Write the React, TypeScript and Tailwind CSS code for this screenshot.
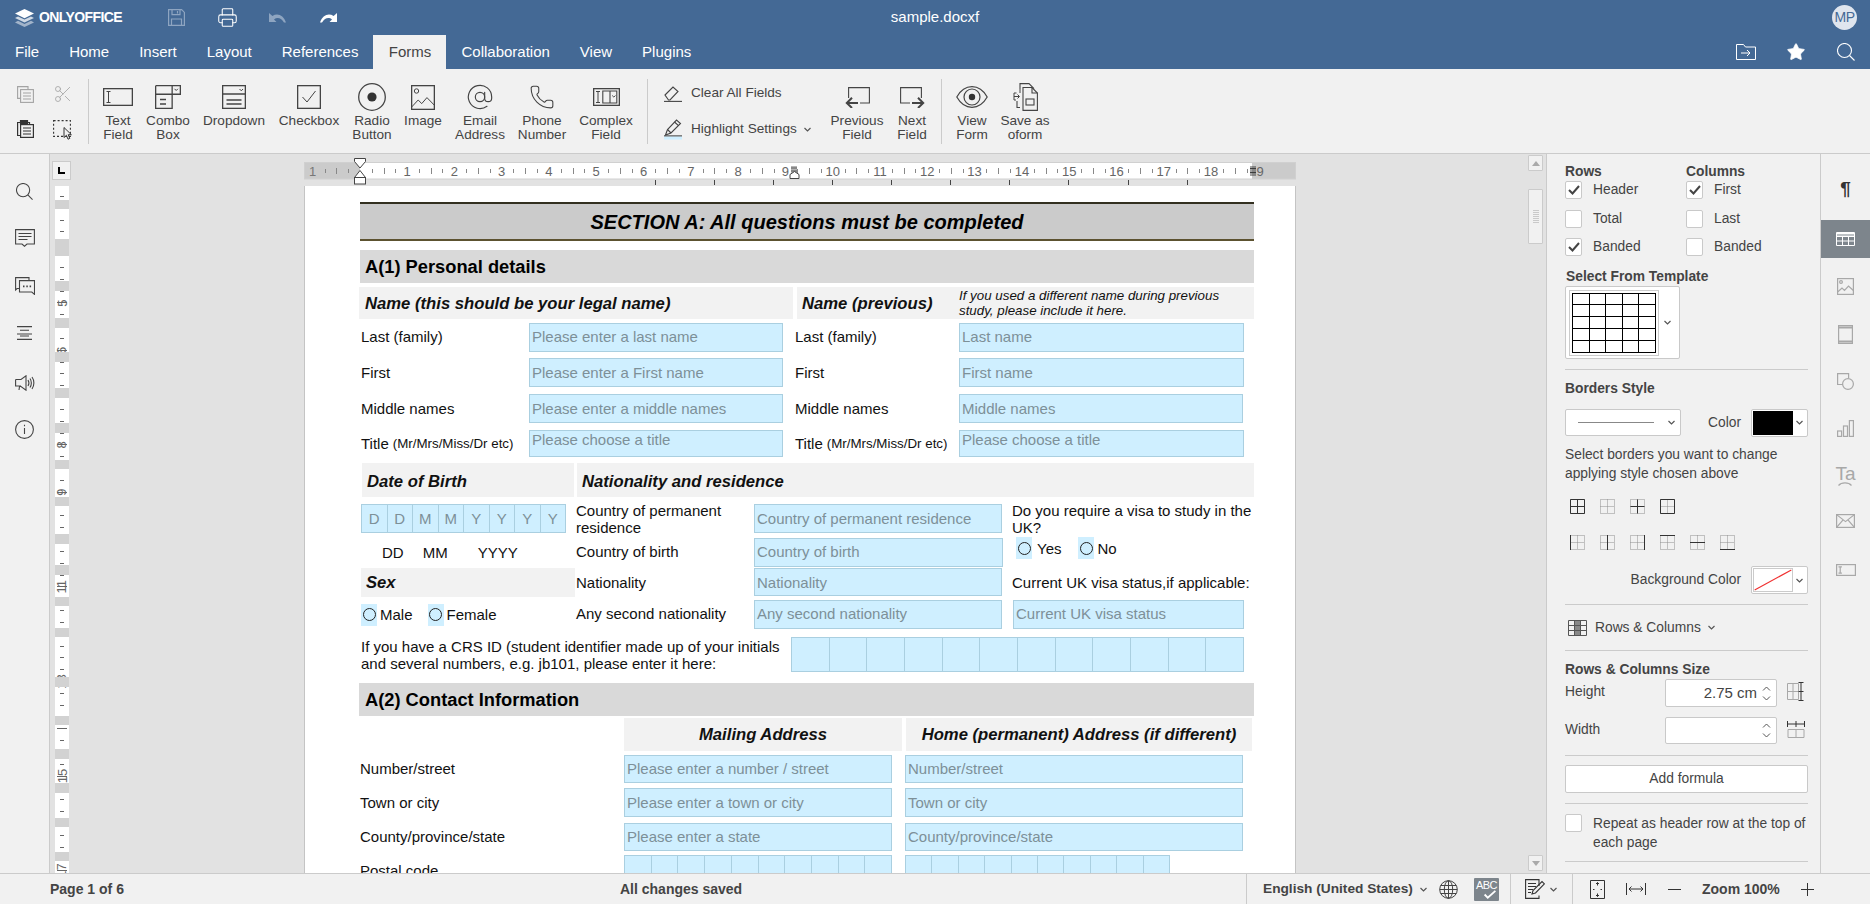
import type { ReactNode } from "react";
import { Scissors, Printer, Star, AtSign, Phone } from "lucide-react";

const DARK = "#444444";

function Chevron({ color = "#555555", size = 9 }: { color?: string; size?: number }) {
  return (
    <svg width={size} height={size} viewBox="0 0 9 9" fill="none" className="shrink-0">
      <path d="M1.5 3l3 3 3-3" stroke={color} strokeWidth="1.2" />
    </svg>
  );
}

/* ---------- header icons ---------- */
function Logo() {
  return (
    <svg width="19" height="18" viewBox="0 0 19 18">
      <path d="M9.5 0L19 4.6 9.5 9.2 0 4.6z" fill="#ffffff" />
      <path d="M3 7.4L9.5 10.6 16 7.4l3 1.6-9.5 4.6L0 9z" fill="#ffffff" opacity="0.75" />
      <path d="M3 11.8L9.5 15 16 11.8l3 1.6L9.5 18 0 13.4z" fill="#ffffff" opacity="0.5" />
    </svg>
  );
}

function SaveIcon() {
  return (
    <svg width="17" height="17" viewBox="0 0 17 17" fill="none" stroke="#8ea5c1" strokeWidth="1.2">
      <path d="M.6.6h13l2.8 2.8v13H.6z" />
      <path d="M4 .6v5h8v-5M9.5 2v2.4M3.5 16.4V10h10v6.4" />
    </svg>
  );
}

function UndoIcon({ flip = false }: { flip?: boolean }) {
  return (
    <svg width="17" height="10" viewBox="0 0 17 10" className={flip ? "-scale-x-100" : ""}>
      <path d="M0 0v9h7.5L5 6.4C8 4 12 4.4 15 9.5h2C14.5 2 8.5-.5 3.4 2.9z" fill="currentColor" />
    </svg>
  );
}

function FolderArrow() {
  return (
    <svg width="20" height="16" viewBox="0 0 20 16" fill="none" stroke="#ffffff" strokeWidth="1">
      <path d="M.5 15.5V.5h7l2 2.5h10v12.5z" />
      <path d="M5 9h9M11 6l3 3-3 3" />
    </svg>
  );
}

function SearchIcon({ color = "#ffffff", size = 18 }: { color?: string; size?: number }) {
  return (
    <svg width={size} height={size} viewBox="0 0 18 18" fill="none" stroke={color} strokeWidth="1.1">
      <circle cx="7.5" cy="7.5" r="7" />
      <path d="M12.5 12.5L17.5 17.5" />
    </svg>
  );
}

/* ---------- ribbon icons ---------- */
const strokeProps = { fill: "none", stroke: DARK, strokeWidth: 1.3 };

function TextFieldIcon() {
  return (
    <svg width="30" height="18" viewBox="0 0 30 18" {...strokeProps}>
      <rect x=".65" y=".65" width="28.7" height="16.7" />
      <path d="M3.5 3.5h4M5.5 3.5v11M3.5 14.5h4" strokeWidth="1" />
    </svg>
  );
}
function ComboIcon() {
  return (
    <svg width="26" height="24" viewBox="0 0 26 24" {...strokeProps}>
      <path d="M.65.65h16.5v8.6h8.2V.65h-8.2M17.15 9.25v14.1H.65V.65M.65 9.25h16.5" />
      <path d="M5 14.5h6M5 19h6" />
      <path d="M19.5 3.8l1.7 1.7 1.7-1.7" strokeWidth="1" />
    </svg>
  );
}
function DropdownIcon() {
  return (
    <svg width="24" height="24" viewBox="0 0 24 24" {...strokeProps}>
      <rect x=".65" y=".65" width="22.7" height="22.7" />
      <path d="M.65 9h22.7M4.5 15h15M4.5 19h15" />
      <path d="M17.5 4l1.8 1.8L21 4" strokeWidth="1" />
    </svg>
  );
}
function CheckboxIcon() {
  return (
    <svg width="24" height="24" viewBox="0 0 24 24" {...strokeProps}>
      <rect x=".65" y=".65" width="22.7" height="22.7" />
      <path d="M5.5 12l4.5 5L18.5 6" strokeWidth="1" />
    </svg>
  );
}
function RadioIcon() {
  return (
    <svg width="28" height="28" viewBox="0 0 28 28" {...strokeProps}>
      <circle cx="14" cy="14" r="13.3" />
      <circle cx="14" cy="14" r="4.6" fill="#333333" stroke="none" />
    </svg>
  );
}
function ImageIcon() {
  return (
    <svg width="24" height="25" viewBox="0 0 24 25" {...strokeProps}>
      <rect x=".65" y=".65" width="22.7" height="23.7" />
      <circle cx="5.5" cy="6" r="2.2" strokeWidth="1" />
      <path d="M.65 22l6.5-7 3.6 3.6 5.2-6 7.3 7.5" strokeWidth="1" />
    </svg>
  );
}
function ComplexIcon() {
  return (
    <svg width="27" height="18" viewBox="0 0 27 18" {...strokeProps}>
      <rect x=".65" y=".65" width="25.7" height="16.7" />
      <path d="M3 3.5h4M5 3.5v11M3 14.5h4" strokeWidth="1" />
      <path d="M9.8 3h14v12h-14zM17 3v12" strokeWidth="1.1" />
      <path d="M19.2 7.5l1.6 1.6 1.6-1.6" strokeWidth="1" />
    </svg>
  );
}
function EraserIcon() {
  return (
    <svg width="19" height="16" viewBox="0 0 19 16" fill="none" stroke={DARK} strokeWidth="1.1">
      <path d="M1 9l8-8 5 4.5-8 8.5H4.5z" />
      <path d="M0 15.4h18" />
    </svg>
  );
}
function HighlightIcon() {
  return (
    <svg width="19" height="21" viewBox="0 0 19 21" fill="none" stroke={DARK} strokeWidth="1.1">
      <path d="M1.5 16l2-5.5L12.5 1l4 3.5-9.5 9.5z" />
      <path d="M10.5 3l4 3.7M3.5 10.5l3.5 3.5" />
      <path d="M0 17h18" strokeWidth="1.3" />
      <rect x="0" y="17.6" width="18" height="3" fill="#cfefff" stroke="none" />
    </svg>
  );
}
function PrevIcon({ flip = false }: { flip?: boolean }) {
  return (
    <svg width="25" height="21" viewBox="0 0 25 21" fill="none" stroke={DARK} className={flip ? "-scale-x-100" : ""}>
      <path d="M3.6 11V.6h20.8V16H15" strokeWidth="1.1" />
      <path d="M13 16H1.8M7 10.8L1.8 16 7 21" strokeWidth="2" />
    </svg>
  );
}
function EyeIcon() {
  return (
    <svg width="32" height="22" viewBox="0 0 32 22" fill="none" stroke={DARK} strokeWidth="1.2">
      <path d="M.8 11C4.5 4.5 10 .7 16 .7S27.5 4.5 31.2 11C27.5 17.5 22 21.3 16 21.3S4.5 17.5.8 11z" />
      <circle cx="16" cy="11" r="8" />
      <circle cx="16" cy="11" r="3.2" fill="#333333" stroke="none" />
    </svg>
  );
}
function OformIcon() {
  return (
    <svg width="25" height="28" viewBox="0 0 25 28" fill="none" stroke={DARK} strokeWidth="1.1">
      <path d="M7 6V.6h9l5 5" />
      <path d="M10 4.5h9l5.4 5.5v17.4H10z" />
      <path d="M19 4.5V10h5.4" />
      <path d="M7 6v4M3.5 10H1v7h2M1 13.5h5M4.5 11.5l2 2-2 2" strokeWidth="1" />
      <path d="M4 18v6.5h3" />
      <rect x="13" y="16" width="8" height="6" />
    </svg>
  );
}
function CopyIcon() {
  return (
    <svg width="17" height="17" viewBox="0 0 17 17" fill="none" stroke="#a3a3a3" strokeWidth="1.1">
      <path d="M11 3.5V.6H.6v11.8h3" />
      <rect x="3.6" y="3.6" width="12.8" height="12.8" />
      <path d="M6 7h8M6 10h8M6 13h8" />
    </svg>
  );
}
function PasteIcon() {
  return (
    <svg width="17" height="18" viewBox="0 0 17 18" fill="none" stroke="#333333" strokeWidth="1.2">
      <path d="M11 2.5h1.5v2M3 2.5H.6v13h3" />
      <rect x="3.5" y=".6" width="7" height="3.4" fill="#333333" />
      <rect x="3.6" y="4.6" width="12.8" height="12.8" />
      <path d="M6 8h8M6 11h8M6 14h8" />
    </svg>
  );
}
function SelectAllIcon() {
  return (
    <svg width="19" height="20" viewBox="0 0 19 20" fill="none">
      <rect x=".6" y=".6" width="16.8" height="15.8" stroke="#333333" strokeWidth="1.1" strokeDasharray="2 2" />
      <path d="M11 7.5v10l2.4-2.2 1.6 3.9 1.8-.8-1.6-3.7h3.2z" fill="#f1f1f1" stroke="#333333" strokeWidth="1" />
    </svg>
  );
}

/* ---------- side bar icons ---------- */
const sideStroke = { fill: "none", stroke: "#444444", strokeWidth: 1.1 };

function CommentIcon() {
  return (
    <svg width="20" height="18" viewBox="0 0 20 18" {...sideStroke}>
      <path d="M.6.6h18.8v14.4H12L9.5 17.2 7 15H.6z" />
      <path d="M3.5 4.5h13M3.5 7.5h13M3.5 10.5h9" />
    </svg>
  );
}
function ChatIcon() {
  return (
    <svg width="20" height="18" viewBox="0 0 20 18" {...sideStroke}>
      <path d="M14 3V.6H.6V13l1.5-1.5H4" />
      <path d="M4.5 3.6h15v13.8l-2.7-2.4H4.5z" />
      <path d="M8 9.3h1.5M11.3 9.3h1.5M14.6 9.3h1.5" strokeWidth="1.7" />
    </svg>
  );
}
function NavIcon() {
  return (
    <svg width="17" height="14" viewBox="0 0 17 14" {...sideStroke}>
      <path d="M1 .6h15M4 4.3h9M1 8h15M4 10h9M1 13.4h15" />
    </svg>
  );
}
function MegaphoneIcon() {
  return (
    <svg width="20" height="16" viewBox="0 0 20 16" {...sideStroke}>
      <path d="M.6 4.5H6L11 .8v14.400L6 11.500H4.500L4 15M.6 4.500v6.500H6" />
      <path d="M13 5c1 1.600 1 4.400 0 6M15 3.500c1.800 2.500 1.800 6.500 0 9M17 2c2.500 3.400 2.500 8.600 0 12" />
    </svg>
  );
}
function InfoIcon() {
  return (
    <svg width="19" height="19" viewBox="0 0 19 19" {...sideStroke}>
      <circle cx="9.5" cy="9.5" r="8.9" />
      <path d="M9.5 8v6M9.5 4.7v1.600" />
    </svg>
  );
}

const greyStroke = { fill: "none", stroke: "#a8a8a8", strokeWidth: 1.2 };

function PanelImage() {
  return (
    <svg width="17" height="17" viewBox="0 0 17 17" {...greyStroke}>
      <rect x=".6" y=".6" width="15.8" height="15.8" />
      <circle cx="4" cy="4" r="1.4" />
      <path d="M.6 14L5 10l2.500 2.400 4-4.400 4.900 4.500" />
    </svg>
  );
}
function PanelHeader() {
  return (
    <svg width="15" height="19" viewBox="0 0 15 19" {...greyStroke}>
      <rect x=".6" y=".6" width="13.8" height="17.8" />
      <path d="M1 2.500h13M1 16.500h13" strokeWidth="2" />
    </svg>
  );
}
function PanelShape() {
  return (
    <svg width="17" height="17" viewBox="0 0 17 17" {...greyStroke}>
      <path d="M6 11.500H.6V.6h11v4.500" />
      <circle cx="11" cy="11" r="5.4" />
    </svg>
  );
}
function PanelChart() {
  return (
    <svg width="17" height="17" viewBox="0 0 17 17" {...greyStroke}>
      <rect x=".6" y="11" width="4" height="5.4" />
      <rect x="6.5" y="6" width="4" height="10.4" />
      <rect x="12.4" y=".6" width="4" height="15.8" />
    </svg>
  );
}
function PanelArt() {
  return (
    <div className="flex flex-col items-center leading-none">
      <span className="text-[19px] font-light leading-[16px] text-[#a8a8a8]">Ta</span>
      <svg width="14" height="4" viewBox="0 0 14 4" {...greyStroke}>
        <path d="M.5 3.500c3-3.400 10-3.400 13 0" />
      </svg>
    </div>
  );
}
function PanelMail() {
  return (
    <svg width="19" height="14" viewBox="0 0 19 14" {...greyStroke}>
      <rect x=".6" y=".6" width="17.8" height="12.8" />
      <path d="M.6.6l8.900 7 8.900-7M.6 13.400l6.500-7.500M18.400 13.400l-6.500-7.500" />
    </svg>
  );
}
function PanelForm() {
  return (
    <svg width="20" height="12" viewBox="0 0 20 12" {...greyStroke}>
      <rect x=".6" y=".6" width="18.8" height="10.8" />
      <path d="M2.500 2.800h3.400M4.200 2.800v6.400M2.500 9.200h3.400" />
    </svg>
  );
}

/* ---------- rulers ---------- */
function HRuler() {
  const originX = 103;
  const cm = 47.3;
  const nums = Array.from({ length: 18 }, (_, i) => i + 1);
  const stops = [351.5, 410.5, 469.5, 528.5, 587.5, 646.5, 705.5, 764.5, 824.5, 883.5];
  return (
    <svg width="992" height="30" viewBox="0 0 992 30" className="block" fontFamily="'Liberation Sans', sans-serif">
      <rect x="0" y="7" width="992" height="16" fill="#cbcbcb" />
      <rect x="56" y="7" width="892" height="16" fill="#ffffff" />
      <rect x=".5" y="6.5" width="991" height="16.5" fill="none" stroke="#d0d0d0" />
      <text x={8.5} y="20" fontSize="13" fill="#777777" textAnchor="middle">1</text>
      {[-3, -2, -1, 1, 2, 3].map((t) => {
        const x = Math.round(56 + t * 11.8) + 0.5;
        return <line key={t} x1={x} x2={x} y1={t % 2 ? 13 : 12} y2={t % 2 ? 17 : 18} stroke="#888888" />;
      })}
      {nums.map((n) => (
        <text key={n} x={originX + (n - 1) * cm} y="20" fontSize="13" fill="#666666" textAnchor="middle">{n}</text>
      ))}
      <text x="956" y="20" fontSize="13" fill="#666666" textAnchor="middle">9</text>
      {nums.map((n) =>
        [1, 2, 3].map((t) => {
          const x = Math.round(originX + (n - 1) * cm + (t * cm) / 4) + 0.5;
          return <line key={`${n}-${t}`} x1={x} x2={x} y1={t === 2 ? 12 : 13} y2={t === 2 ? 18 : 17} stroke="#888888" />;
        }),
      )}
      {stops.map((x) => (
        <line key={x} x1={x} x2={x} y1="24" y2="29" stroke="#444444" />
      ))}
      <path d="M50.5 2.500h11v3L56 12l-5.500-6.500zM50.500 21.500L56 14.500l5.500 7" fill="#ffffff" stroke="#444444" strokeWidth="1" />
      <rect x="50.5" y="21.5" width="11" height="6.5" fill="#ffffff" stroke="#444444" />
      <path d="M488 10v7M490 10v7M492 10v7M487 12h6M487 15h6" stroke="#444444" strokeWidth=".8" />
      <path d="M486 22.500v-4l4.500-3 4.500 3v4z" fill="#ffffff" stroke="#444444" />
      <path d="M947 10v10M949 10v10M951 10v10M946 12.500h6M946 16.500h6" stroke="#333333" strokeWidth=".9" />
    </svg>
  );
}

function VRuler() {
  const bands: [number, number][] = [
    [200, 209], [239, 248], [248, 256], [281, 291], [318, 328], [352, 362], [388, 398], [423, 433], [460, 469],
    [497, 506], [534, 544], [565, 575], [597, 606], [628, 637], [677, 687], [716, 725], [749, 759], [783, 793],
    [818, 827], [852, 861],
  ];
  const nums = [5, 6, 8, 9, 11, 13, 15, 17];
  const ticks: number[] = [];
  for (let y = 196; y < 873; y += 11.83) ticks.push(Math.round(y));
  return (
    <svg width="14" height="687" viewBox="0 186 14 687" className="block" fontFamily="'Liberation Sans', sans-serif">
      <rect x="0" y="186" width="14" height="687" fill="#ffffff" />
      {ticks.map((y, i) => (
        <line key={y} x1={i % 4 === 1 ? 2 : 5} x2={i % 4 === 1 ? 12 : 9} y1={y + 0.5} y2={y + 0.5} stroke="#666666" />
      ))}
      {nums.map((n) => {
        const y = 303 + (n - 5) * 47.3;
        return (
          <text key={n} x="7" y={y} fontSize="13" fill="#666666" textAnchor="middle" dominantBaseline="central" transform={`rotate(-90 7 ${y})`}>
            {n}
          </text>
        );
      })}
      {bands.map(([a, b]) => (
        <rect key={a} x="0" y={a} width="14" height={b - a} fill="#d2d2d2" />
      ))}
    </svg>
  );
}

/* ---------- document bits ---------- */
function Field({ text, className, top }: { text?: string; className: string; top?: boolean }) {
  return (
    <div className={`flex shrink-0 ${top ? "items-start" : "items-center"} border border-[#aacfe0] bg-[#cfefff] pl-[2px] text-[#7d9098] ${className}`}>
      {text}
    </div>
  );
}

function Cells({ labels, className }: { labels: string[]; className: string }) {
  return (
    <div className={`flex shrink-0 border border-[#aacfe0] bg-[#cfefff] text-[#7d9098] ${className}`}>
      {labels.map((l, i) => (
        <div key={i} className="flex flex-1 items-center justify-center border-r border-[#aacfe0] last:border-r-0">
          {l}
        </div>
      ))}
    </div>
  );
}

function Radio({ label, className, gap }: { label: string; className?: string; gap: string }) {
  return (
    <div className={`flex items-center ${className ?? ""}`}>
      <div className="flex h-[22px] w-[16px] items-center justify-center bg-[#cfefff]">
        <div className="h-[13px] w-[13px] rounded-full border border-[#222222]" />
      </div>
      <span className={gap}>{label}</span>
    </div>
  );
}

// nudge lifts a row's text by one pixel where the reference sits higher
function NameRow({ label, small, ph, ph2, className, top, w2, nudge }: {
  label: string; small?: string; ph: string; ph2: string; className: string; top?: boolean; w2?: string; nudge?: boolean;
}) {
  const lift = nudge ? "pb-[2px]" : "";
  return (
    <div className={`ml-[2px] flex ${className}`}>
      <div className={`flex w-[168px] items-center whitespace-nowrap ${lift}`}>
        <span>{label}</span>
        {small && <span className="ml-[4px] text-[13.33px]">{small}</span>}
      </div>
      <Field text={ph} top={top} className={`w-[254px] ${lift}`} />
      <div className={`ml-[12px] flex w-[164px] items-center whitespace-nowrap ${lift}`}>
        <span>{label}</span>
        {small && <span className="ml-[4px] text-[13.33px]">{small}</span>}
      </div>
      <Field text={ph2} top={top} className={`${w2 ?? "w-[285px]"} ${lift}`} />
    </div>
  );
}

function AddressRow({ label, ph, ph2, className, nudge }: { label: string; ph: string; ph2: string; className: string; nudge?: boolean }) {
  const lift = nudge ? "pb-[2px]" : "";
  return (
    <div className={`ml-[1px] flex ${className}`}>
      <div className={`flex w-[264px] items-center ${lift}`}>{label}</div>
      <Field text={ph} className={`w-[268px] ${lift}`} />
      <Field text={ph2} className={`ml-[13px] w-[338px] ${lift}`} />
    </div>
  );
}

function Page() {
  const empty10 = Array.from({ length: 10 }, () => "");
  return (
    <div className="h-[687px] w-[992px] overflow-hidden border-l border-r border-[#c4c4c4] bg-white pl-[54px] text-[15px] leading-[17px] text-[#111111]">
      <div className="ml-[1px] mt-[16px] flex h-[39px] w-[894px] items-center justify-center border-b-2 border-t-2 border-b-[#5c5230] border-t-[#333020] bg-[#cbcbcb] pt-[1px] text-[20px] font-bold italic text-black">
        SECTION A: All questions must be completed
      </div>
      <div className="ml-[1px] mt-[9px] flex h-[33px] w-[894px] items-center bg-[#d9d9d9] pl-[5px] text-[18.3px] font-bold text-black">
        A(1) Personal details
      </div>

      <div className="mt-[4px] flex h-[32px] w-[895px]">
        <div className="flex w-[434px] items-center bg-[#f2f2f2] pl-[6px] text-[16.67px] font-bold italic">
          Name (this should be your legal name)
        </div>
        <div className="ml-[4px] flex flex-1 items-center bg-[#f2f2f2] pl-[5px]">
          <span className="w-[157px] text-[16.67px] font-bold italic">Name (previous)</span>
          <span className="text-[13.33px] italic leading-[15px]">
            If you used a different name during previous
            <br />
            study, please include it here.
          </span>
        </div>
      </div>

      <NameRow nudge className="mt-[4px] h-[29px]" label="Last (family)" ph="Please enter a last name" ph2="Last name" />
      <NameRow className="mt-[6px] h-[29px]" label="First" ph="Please enter a First name" ph2="First name" />
      <NameRow className="mt-[7px] h-[29px]" w2="w-[284px]" label="Middle names" ph="Please enter a middle names" ph2="Middle names" />
      <NameRow className="mt-[7px] h-[27px]" top label="Title" small="(Mr/Mrs/Miss/Dr etc)" ph="Please choose a title" ph2="Please choose a title" />

      <div className="ml-[3px] mt-[6px] flex h-[34px]">
        <div className="flex w-[212px] items-center bg-[#f2f2f2] pl-[5px] pt-[2px] text-[16.67px] font-bold italic">Date of Birth</div>
        <div className="ml-[3px] flex w-[677px] items-center bg-[#f2f2f2] pl-[5px] pt-[2px] text-[16.67px] font-bold italic">Nationality and residence</div>
      </div>

      <div className="ml-[2px] mt-[7px] flex h-[29px]">
        <Cells labels={["D", "D", "M", "M", "Y", "Y", "Y", "Y"]} className="w-[205px]" />
        <div className="ml-[10px] flex w-[178px] shrink-0 items-center leading-[17px]">Country of permanent residence</div>
        <Field text="Country of permanent residence" className="w-[248px]" />
        <div className="ml-[10px] flex w-[248px] items-center">Do you require a visa to study in the UK?</div>
      </div>

      <div className="mt-[5px] flex h-[29px]">
        <div className="flex w-[217px] shrink-0 items-center">
          <span className="ml-[23px]">DD</span>
          <span className="ml-[19px]">MM</span>
          <span className="ml-[30px]">YYYY</span>
        </div>
        <div className="flex w-[178px] shrink-0 items-center pb-[2px]">Country of birth</div>
        <Field text="Country of birth" className="w-[249px] pb-[2px]" />
        <div className="mb-[9px] ml-[13px] flex items-center">
          <Radio label="Yes" gap="ml-[5px]" />
          <Radio label="No" gap="ml-[3px]" className="ml-[17px]" />
        </div>
      </div>

      <div className="ml-[2px] mt-[1px] flex h-[29px]">
        <div className="flex w-[214px] shrink-0 items-center bg-[#f2f2f2] pl-[5px] text-[16.67px] font-bold italic">Sex</div>
        <div className="flex w-[179px] shrink-0 items-center pl-[1px]">Nationality</div>
        <Field text="Nationality" className="h-[28px] w-[248px]" />
        <div className="ml-[10px] flex items-center whitespace-nowrap">Current UK visa status,if applicable:</div>
      </div>

      <div className="ml-[2px] mt-[3px] flex h-[29px]">
        <div className="flex w-[215px] shrink-0 items-center">
          <Radio label="Male" gap="ml-[3px]" />
          <Radio label="Female" gap="ml-[3px]" className="ml-[15px]" />
        </div>
        <div className="flex w-[178px] shrink-0 items-center pb-[2px]">Any second nationality</div>
        <Field text="Any second nationality" className="w-[248px] pb-[2px]" />
        <Field text="Current UK visa status" className="ml-[11px] w-[231px] pb-[2px]" />
      </div>

      <div className="ml-[2px] mt-[8px] flex h-[35px]">
        <div className="flex w-[430px] shrink-0 items-center leading-[17px]">
          If you have a CRS ID (student identifier made up of your initials and several numbers, e.g. jb101, please enter it here:
        </div>
        <Cells labels={[...empty10, "", ""]} className="w-[453px]" />
      </div>

      <div className="mt-[11px] flex h-[33px] w-[895px] items-center bg-[#d9d9d9] pl-[6px] text-[18.3px] font-bold text-black">
        A(2) Contact Information
      </div>

      <div className="ml-[265px] mt-[2px] flex h-[33px]">
        <div className="flex w-[278px] items-center justify-center bg-[#f2f2f2] text-[16.67px] font-bold italic">Mailing Address</div>
        <div className="ml-[4px] flex w-[346px] items-center justify-center bg-[#f2f2f2] text-[16.67px] font-bold italic">Home (permanent) Address (if different)</div>
      </div>

      <AddressRow nudge className="mt-[4px] h-[28px]" label="Number/street" ph="Please enter a number / street" ph2="Number/street" />
      <AddressRow className="mt-[5px] h-[29px]" label="Town or city" ph="Please enter a town or city" ph2="Town or city" />
      <AddressRow nudge className="mt-[6px] h-[28px]" label="County/province/state" ph="Please enter a state" ph2="County/province/state" />

      <div className="ml-[1px] mt-[4px] flex h-[40px]">
        <div className="w-[264px] pt-[7px]">Postal code</div>
        <Cells labels={empty10} className="w-[268px]" />
        <Cells labels={empty10} className="ml-[13px] w-[265px]" />
      </div>
    </div>
  );
}

/* ---------- ribbon ---------- */
const ribbonButtons: { lines: string[]; icon: ReactNode; cls: string }[] = [
  { lines: ["Text", "Field"], icon: <TextFieldIcon />, cls: "ml-[7px] w-[44px]" },
  { lines: ["Combo", "Box"], icon: <ComboIcon />, cls: "ml-[6px] w-[44px]" },
  { lines: ["Dropdown"], icon: <DropdownIcon />, cls: "ml-[10px] w-[68px]" },
  { lines: ["Checkbox"], icon: <CheckboxIcon />, cls: "ml-[6px] w-[70px]" },
  { lines: ["Radio", "Button"], icon: <RadioIcon />, cls: "ml-[6px] w-[44px]" },
  { lines: ["Image"], icon: <ImageIcon />, cls: "ml-[7px] w-[44px]" },
  { lines: ["Email", "Address"], icon: <AtSign size={28} strokeWidth={1} color="#444444" />, cls: "ml-[7px] w-[56px]" },
  { lines: ["Phone", "Number"], icon: <Phone size={26} strokeWidth={1} color="#444444" />, cls: "ml-[6px] w-[56px]" },
  { lines: ["Complex", "Field"], icon: <ComplexIcon />, cls: "ml-[6px] w-[60px]" },
];

function RibbonButton({ lines, icon, cls }: { lines: string[]; icon: ReactNode; cls: string }) {
  return (
    <div className={`flex shrink-0 flex-col items-center ${cls}`}>
      <div className="mt-[14px] flex h-[28px] items-center justify-center">{icon}</div>
      <div className="mt-[3px] text-center text-[13.6px] leading-[14px]">
        {lines.map((l) => (
          <div key={l} className="whitespace-nowrap">{l}</div>
        ))}
      </div>
    </div>
  );
}

function RibbonDivider({ className }: { className: string }) {
  return <div className={`mt-[10px] h-[65px] w-px shrink-0 bg-[#cbcbcb] ${className}`} />;
}

function Ribbon() {
  return (
    <div className="flex h-[85px] shrink-0 border-b border-[#cbcbcb] bg-[#f1f1f1] text-[#444444]">
      <div className="ml-[17px] flex w-[17px] flex-col">
        <div className="mt-[17px]"><CopyIcon /></div>
        <div className="mt-[17px]"><PasteIcon /></div>
      </div>
      <div className="ml-[19px] flex w-[20px] flex-col">
        <div className="mt-[15px]"><Scissors size={20} strokeWidth={1} color="#a3a3a3" /></div>
        <div className="mt-[16px]"><SelectAllIcon /></div>
      </div>
      <RibbonDivider className="ml-[15px]" />
      {ribbonButtons.map((b) => (
        <RibbonButton key={b.lines[0]} {...b} />
      ))}
      <RibbonDivider className="ml-[11px]" />
      <div className="ml-[16px] flex w-[148px] shrink-0 flex-col text-[13.6px]">
        <div className="mt-[16px] flex h-[17px] items-center">
          <EraserIcon />
          <span className="ml-[8px]">Clear All Fields</span>
        </div>
        <div className="mt-[17px] flex h-[21px] items-center">
          <HighlightIcon />
          <span className="ml-[8px]">Highlight Settings</span>
          <span className="ml-[6px]"><Chevron /></span>
        </div>
      </div>
      <RibbonButton lines={["Previous", "Field"]} icon={<PrevIcon />} cls="ml-[17px] w-[56px]" />
      <RibbonButton lines={["Next", "Field"]} icon={<PrevIcon flip />} cls="ml-[7px] w-[40px]" />
      <RibbonDivider className="ml-[9px]" />
      <RibbonButton lines={["View", "Form"]} icon={<EyeIcon />} cls="ml-[10px] w-[40px]" />
      <RibbonButton lines={["Save as", "oform"]} icon={<OformIcon />} cls="ml-[5px] w-[56px]" />
    </div>
  );
}

/* ---------- right panel ---------- */
function Check({ checked, label }: { checked?: boolean; label?: string }) {
  return (
    <div className="flex h-[18px] items-center">
      <div className="flex h-[18px] w-[17px] shrink-0 items-center justify-center rounded-[2px] border border-[#c9c9c9] bg-white">
        {checked && (
          <svg width="12" height="10" viewBox="0 0 12 10" fill="none" stroke="#444444" strokeWidth="2">
            <path d="M1 5l3.500 3.500L11 1" />
          </svg>
        )}
      </div>
      {label && <span className="ml-[11px]">{label}</span>}
    </div>
  );
}

function Rule({ className }: { className: string }) {
  return <div className={`h-px w-[243px] bg-[#cbcbcb] ${className}`} />;
}

const GRID = "M.5.5h14v14H.5zM7.5.5v14M.5 7.500h14";
const border1 = [GRID, "", "M7.5.5v14M.5 7.500h14", "M.5.5h14v14H.5z"];
const border2 = ["M.5 0v15", "M7.500 0v15", "M14.500 0v15", "M0 .5h15", "M0 7.500h15", "M0 14.500h15"];

function BorderBtn({ dark }: { dark: string }) {
  return (
    <svg width="15" height="15" viewBox="0 0 15 15" fill="none" className="shrink-0">
      <path d={GRID} stroke="#8f8f8f" strokeDasharray="1 1" />
      {dark && <path d={dark} stroke="#333333" />}
    </svg>
  );
}

function ColorBox({ children }: { children: ReactNode }) {
  return (
    <div className="flex h-[28px] w-[57px] items-center rounded-[2px] border border-[#c9c9c9] bg-white pl-[1px]">
      {children}
      <span className="ml-[2px]"><Chevron /></span>
    </div>
  );
}

function Spinner() {
  return (
    <div className="mx-[5px] flex flex-col gap-[3px]">
      <svg width="9" height="7" viewBox="0 0 9 7" fill="none" stroke="#555555"><path d="M1 5.500l3.500-3.500L8 5.500" /></svg>
      <svg width="9" height="7" viewBox="0 0 9 7" fill="none" stroke="#555555"><path d="M1 1.500L4.500 5 8 1.500" /></svg>
    </div>
  );
}

function TemplateGrid() {
  return (
    <div className="grid h-[60px] w-[84px] grid-cols-5 grid-rows-5 border-l border-t border-black">
      {Array.from({ length: 25 }).map((_, i) => (
        <div key={i} className="border-b border-r border-black" />
      ))}
    </div>
  );
}

function RightPanel() {
  return (
    <div className="flex w-[275px] shrink-0 flex-col border-l border-r border-[#cbcbcb] bg-[#f1f1f1] pl-[18px] text-[13.8px] leading-[16px] text-[#444444]">
      <div className="mt-[9px] flex">
        <div className="flex w-[121px] flex-col">
          <div className="h-[16px] pt-[1px] font-bold">Rows</div>
          <div className="mt-[2px]"><Check checked label="Header" /></div>
          <div className="mt-[11px]"><Check label="Total" /></div>
          <div className="mt-[10px]"><Check checked label="Banded" /></div>
        </div>
        <div className="flex flex-col">
          <div className="h-[16px] pt-[1px] font-bold">Columns</div>
          <div className="mt-[2px]"><Check checked label="First" /></div>
          <div className="mt-[11px]"><Check label="Last" /></div>
          <div className="mt-[10px]"><Check label="Banded" /></div>
        </div>
      </div>

      <div className="mt-[12px] h-[16px] pl-[1px] pt-[1px] font-bold">Select From Template</div>
      <div className="mt-[2px] flex h-[73px] w-[115px] items-center rounded-[2px] border border-[#c9c9c9] bg-white pl-[3px]">
        <div className="border border-[#cbcbcb] p-[2px]"><TemplateGrid /></div>
        <span className="ml-[4px]"><Chevron /></span>
      </div>

      <Rule className="mt-[10px]" />
      <div className="mt-[10px] h-[16px] pt-[1px] font-bold">Borders Style</div>

      <div className="mt-[13px] flex h-[27px] items-center">
        <div className="flex h-[27px] w-[116px] items-center rounded-[2px] border border-[#c9c9c9] bg-white pl-[12px]">
          <div className="h-px w-[76px] bg-[#888888]" />
          <span className="ml-[13px]"><Chevron /></span>
        </div>
        <span className="ml-[27px] w-[43px]">Color</span>
        <ColorBox><div className="h-[24px] w-[40px] bg-black" /></ColorBox>
      </div>

      <p className="mt-[9px] h-[38px] leading-[19px]">
        Select borders you want to change
        <br />
        applying style chosen above
      </p>

      <div className="ml-[5px] mt-[15px] flex h-[16px] items-center gap-[15px]">
        {border1.map((dark, i) => (
          <BorderBtn key={i} dark={dark} />
        ))}
      </div>
      <div className="ml-[5px] mt-[20px] flex h-[16px] items-center gap-[15px]">
        {border2.map((dark, i) => (
          <BorderBtn key={i} dark={dark} />
        ))}
      </div>

      <div className="mt-[16px] flex h-[28px] w-[243px] items-center justify-end">
        <span className="mr-[10px]">Background Color</span>
        <ColorBox>
          <svg width="40" height="24" viewBox="0 0 40 24" className="border border-[#cbcbcb]">
            <line x1="0" y1="23" x2="40" y2="1" stroke="#f03030" strokeWidth="1.3" />
          </svg>
        </ColorBox>
      </div>

      <Rule className="mt-[10px]" />

      <div className="mt-[12px] flex h-[21px] items-center pl-[3px]">
        <svg width="19" height="16" viewBox="0 0 19 16" fill="none" stroke="#555555">
          <rect x="6.5" y=".5" width="6" height="15" fill="#888888" stroke="none" />
          <path d="M.5.5h18v15H.5zM6.500.5v15M12.500.5v15M.5 5.500h18M.5 10.500h18" />
        </svg>
        <span className="ml-[8px]">Rows &amp; Columns</span>
        <span className="ml-[6px]"><Chevron /></span>
      </div>

      <Rule className="mt-[12px]" />
      <div className="mt-[10px] h-[16px] pt-[1px] font-bold">Rows &amp; Columns Size</div>

      <div className="mt-[2px] flex h-[28px]">
        <span className="w-[100px] pt-[5px]">Height</span>
        <div className="flex h-[28px] w-[112px] items-center justify-end rounded-[2px] border border-[#c9c9c9] bg-white text-[15px]">
          2.75 cm
          <Spinner />
        </div>
        <svg width="18" height="19" viewBox="0 0 18 19" fill="none" className="ml-[10px] mt-[3px]">
          <path d="M.5 1.500h11v16H.5zM.5 9.500h11M6 1.500v16" stroke="#a8a8a8" />
          <path d="M14 0v19M11.500.5h5M11.500 9.500h5M11.500 18.500h5" stroke="#333333" />
        </svg>
      </div>

      <div className="mt-[10px] flex h-[27px]">
        <span className="w-[100px] pt-[5px]">Width</span>
        <div className="flex h-[27px] w-[112px] items-center justify-end rounded-[2px] border border-[#c9c9c9] bg-white">
          <Spinner />
        </div>
        <svg width="18" height="17" viewBox="0 0 18 17" fill="none" className="ml-[10px] mt-[4px]">
          <path d="M1 8.500h16v8H1zM9 8.500v8" stroke="#a8a8a8" />
          <path d="M0 3h18M.5 0v6M9 0v6M17.500 0v6" stroke="#333333" />
        </svg>
      </div>

      <Rule className="mt-[11px]" />
      <div className="mt-[9px] flex h-[28px] w-[243px] items-center justify-center rounded-[2px] border border-[#c9c9c9] bg-white">Add formula</div>
      <Rule className="mt-[10px]" />

      <div className="mt-[10px] flex h-[38px]">
        <Check />
        <p className="ml-[11px] w-[220px] leading-[19px]">Repeat as header row at the top of each page</p>
      </div>
      <Rule className="mt-[9px]" />
    </div>
  );
}

function RightTabs() {
  return (
    <div className="flex w-[49px] shrink-0 flex-col items-center bg-[#f1f1f1]">
      <div className="mt-[25px] flex h-[19px] items-center justify-center text-[19px] font-bold leading-none text-[#333333]">¶</div>
      <div className="mt-[22px] flex h-[38px] w-full items-center justify-center bg-[#7d858c]">
        <svg width="19" height="14" viewBox="0 0 19 14" fill="none" stroke="#ffffff">
          <path d="M.5.500h18v13H.5zM.5 4.500h18M.5 9h18M6.500 4.500v9M12.500 4.500v9" />
          <path d="M.5 1.500h18M.5 3h18" />
        </svg>
      </div>
      <div className="mt-[20px]"><PanelImage /></div>
      <div className="mt-[30px]"><PanelHeader /></div>
      <div className="mt-[29px]"><PanelShape /></div>
      <div className="mt-[30px]"><PanelChart /></div>
      <div className="mt-[29px]"><PanelArt /></div>
      <div className="mt-[28px]"><PanelMail /></div>
      <div className="mt-[36px]"><PanelForm /></div>
    </div>
  );
}

function ScrollBar() {
  return (
    <div className="mr-[3px] flex w-[15px] shrink-0 flex-col">
      <div className="mt-[1px] flex h-[16px] items-center justify-center rounded-[1px] border border-[#cbcbcb] bg-[#f1f1f1]">
        <svg width="8" height="5" viewBox="0 0 8 5"><path d="M4 0l4 5H0z" fill="#aaaaaa" /></svg>
      </div>
      <div className="mt-[18px] flex h-[55px] flex-col items-center justify-center gap-[1px] rounded-[1px] border border-[#cbcbcb] bg-[#f1f1f1]">
        {Array.from({ length: 7 }).map((_, i) => (
          <div key={i} className="h-px w-[6px] bg-[#c9c9c9]" />
        ))}
      </div>
      <div className="mb-[2px] mt-auto flex h-[16px] items-center justify-center rounded-[1px] border border-[#cbcbcb] bg-[#f1f1f1]">
        <svg width="8" height="5" viewBox="0 0 8 5"><path d="M4 5l4-5H0z" fill="#aaaaaa" /></svg>
      </div>
    </div>
  );
}

function StatusBar() {
  return (
    <div className="flex h-[31px] shrink-0 items-center border-t border-[#cbcbcb] bg-[#f1f1f1] text-[14px] font-bold text-[#444444]">
      <span className="ml-[50px] w-[570px]">Page 1 of 6</span>
      <span className="w-[626px]">All changes saved</span>
      <div className="flex h-full w-[265px] items-center border-l border-r border-[#cbcbcb] pl-[16px]">
        <span className="w-[150px] whitespace-nowrap text-[13.7px]">English (United States)</span>
        <span className="ml-[6px]"><Chevron /></span>
        <svg width="19" height="19" viewBox="0 0 19 19" fill="none" stroke="#444444" strokeWidth="1" className="ml-[11px]">
          <circle cx="9.5" cy="9.5" r="8.8" />
          <ellipse cx="9.5" cy="9.5" rx="4.2" ry="8.8" />
          <path d="M9.5.7v17.600M.7 9.500h17.600M1.800 5.500h15.400M1.800 13.500h15.400" />
        </svg>
        <div className="ml-[16px] flex h-[23px] w-[25px] flex-col items-center rounded-[1px] bg-[#7d858c] pt-[2px] text-[11px] font-normal leading-[10px] tracking-[-0.5px] text-white">
          <span>ABC</span>
          <svg width="14" height="9" viewBox="0 0 14 10" fill="none" stroke="#ffffff" strokeWidth="2" className="ml-[6px]">
            <path d="M1 5l3.500 3.500L13 1" />
          </svg>
        </div>
      </div>
      <div className="flex h-full w-[62px] items-center border-r border-[#cbcbcb] pl-[14px]">
        <svg width="20" height="20" viewBox="0 0 20 20" fill="none" stroke="#333333" strokeWidth="1.1">
          <path d="M14 7V.6H.6v18.800H14v-3" />
          <path d="M3 4.500h8M3 7.500h8M3 10.500h5M3 13.500h3" />
          <path d="M7 15l1-3.500L17 2.500l2.400 2.400L10.500 14z" />
        </svg>
        <span className="ml-[4px]"><Chevron /></span>
      </div>
      <svg width="15" height="19" viewBox="0 0 15 19" fill="none" stroke="#333333" className="ml-[17px]">
        <path d="M.5.5h14v18H.5z" />
        <path d="M7.500 2.500v3M6 4l1.500-1.500L9 4M7.500 16.500v-3M6 15l1.500 1.500L9 15M3 9.500h1.500M12 9.500h-1.500" />
      </svg>
      <svg width="20" height="12" viewBox="0 0 20 12" fill="none" stroke="#333333" className="ml-[21px]">
        <path d="M.5 0v12M19.500 0v12M3 6h14M5.500 3.500L3 6l2.500 2.500M14.500 3.500L17 6l-2.500 2.500" />
      </svg>
      <div className="ml-[22px] h-px w-[13px] bg-[#333333]" />
      <span className="ml-[21px] w-[78px] whitespace-nowrap">Zoom 100%</span>
      <svg width="13" height="13" viewBox="0 0 13 13" fill="none" stroke="#333333" className="ml-[21px]">
        <path d="M0 6.500h13M6.500 0v13" />
      </svg>
    </div>
  );
}

const tabs = ["File", "Home", "Insert", "Layout", "References", "Forms", "Collaboration", "View", "Plugins"];

export default function App() {
  return (
    <div className="flex h-[904px] w-[1870px] flex-col overflow-hidden bg-[#f1f1f1] font-['Liberation_Sans',Arial,sans-serif]">
      <div className="flex h-[69px] shrink-0 flex-col bg-[#446995] text-white">
        <div className="flex h-[35px] items-center">
          <div className="ml-[15px]"><Logo /></div>
          <span className="ml-[5px] w-[88px] text-[14px] font-bold tracking-[-0.6px]">ONLYOFFICE</span>
          <div className="ml-[41px]"><SaveIcon /></div>
          <div className="ml-[32px]"><Printer size={21} strokeWidth={1.2} color="#ffffff" /></div>
          <div className="ml-[31px] text-[#8ea5c1]"><UndoIcon /></div>
          <div className="ml-[34px] text-white"><UndoIcon flip /></div>
          <span className="ml-[552px] w-[92px] whitespace-nowrap text-center text-[15px]">sample.docxf</span>
          <div className="ml-[851px] flex h-[25px] w-[25px] items-center justify-center rounded-full bg-[#dfe5ee] text-[14px] tracking-[-0.5px] text-[#446995]">MP</div>
        </div>
        <div className="flex h-[34px] items-center">
          {tabs.map((t) =>
            t === "Forms" ? (
              <div key={t} className="flex h-full items-center bg-[#f1f1f1] px-[15.25px] text-[15px] text-[#444444]">{t}</div>
            ) : (
              <div key={t} className="flex h-full items-center px-[15px] text-[15px]">{t}</div>
            ),
          )}
          <div className="ml-auto flex items-center">
            <FolderArrow />
            <div className="ml-[30px]"><Star size={20} fill="#ffffff" color="#ffffff" strokeWidth={1} /></div>
            <div className="ml-[31px] mr-[15px]"><SearchIcon /></div>
          </div>
        </div>
      </div>

      <Ribbon />

      <div className="flex min-h-0 flex-1">
        <div className="flex w-[50px] shrink-0 flex-col items-center border-r border-[#cbcbcb] bg-[#f1f1f1]">
          <div className="mt-[29px]"><SearchIcon color="#444444" size={17} /></div>
          <div className="mt-[29px]"><CommentIcon /></div>
          <div className="mt-[30px]"><ChatIcon /></div>
          <div className="mt-[31px]"><NavIcon /></div>
          <div className="mt-[35px]"><MegaphoneIcon /></div>
          <div className="mt-[29px]"><InfoIcon /></div>
        </div>

        <div className="flex min-w-0 flex-1 bg-[#e2e2e2]">
          <div className="flex w-[22px] shrink-0 flex-col pl-[2px]">
            <div className="mt-[7px] flex h-[19px] w-[19px] items-center justify-center border border-[#cbcbcb] bg-[#f1f1f1]">
              <div className="h-[7px] w-[7px] border-b-2 border-l-2 border-black" />
            </div>
            <div className="ml-[3px] mt-[6px]"><VRuler /></div>
          </div>
          <div className="min-w-0 flex-1 pl-[232px] pt-[2px]">
            <HRuler />
            <Page />
          </div>
          <ScrollBar />
        </div>

        <RightPanel />
        <RightTabs />
      </div>

      <StatusBar />
    </div>
  );
}
